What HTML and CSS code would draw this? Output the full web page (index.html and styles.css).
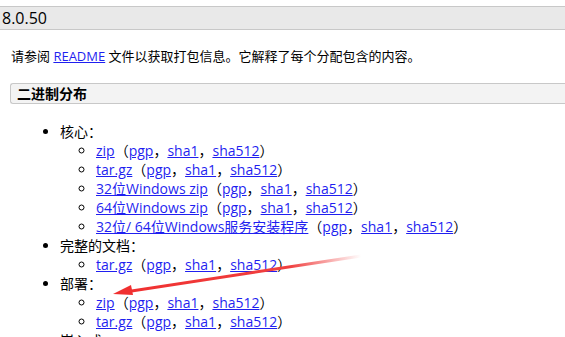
FILE: index.html
```html
<!DOCTYPE html>
<html lang="zh-CN">
<head>
    <meta charset="UTF-8">
    <title>Tomcat 8.0.50</title>
    <link rel="stylesheet" href="styles.css">
</head>
<body>
    <h3 class="version">8.0.50</h3>

    <p class="intro">请参阅 <a href="#">README</a> 文件以获取打包信息。它解释了每个分配包含的内容。</p>

    <div class="section">
        <h4 class="section-title">二进制分布</h4>

        <ul class="dist">
            <li>核心：
                <ul>
                    <li><a href="#">zip</a>（<a href="#">pgp</a>，<a href="#">sha1</a>，<a href="#">sha512</a>）</li>
                    <li><a href="#">tar.gz</a>（<a href="#">pgp</a>，<a href="#">sha1</a>，<a href="#">sha512</a>）</li>
                    <li><a href="#">32位Windows zip</a>（<a href="#">pgp</a>，<a href="#">sha1</a>，<a href="#">sha512</a>）</li>
                    <li><a href="#">64位Windows zip</a>（<a href="#">pgp</a>，<a href="#">sha1</a>，<a href="#">sha512</a>）</li>
                    <li><a href="#">32位/ 64位Windows服务安装程序</a>（<a href="#">pgp</a>，<a href="#">sha1</a>，<a href="#">sha512</a>）</li>
                </ul>
            </li>
            <li>完整的文档：
                <ul>
                    <li><a href="#">tar.gz</a>（<a href="#">pgp</a>，<a href="#">sha1</a>，<a href="#">sha512</a>）</li>
                </ul>
            </li>
            <li>部署：
                <ul>
                    <li><a href="#">zip</a>（<a href="#">pgp</a>，<a href="#">sha1</a>，<a href="#">sha512</a>）</li>
                    <li><a href="#">tar.gz</a>（<a href="#">pgp</a>，<a href="#">sha1</a>，<a href="#">sha512</a>）</li>
                </ul>
            </li>
            <li>嵌入式：</li>
        </ul>

        <!-- red annotation arrow pointing at the deployer zip -->
        <svg class="arrow" width="260" height="50" viewBox="0 0 260 50">
            <defs>
                <linearGradient id="fade" x1="0" y1="0" x2="1" y2="0">
                    <stop offset="0" stop-color="#f03030"/>
                    <stop offset="0.7" stop-color="#f04040"/>
                    <stop offset="1" stop-color="#f04040" stop-opacity="0"/>
                </linearGradient>
            </defs>
            <path d="M14 38 L250 2" stroke="url(#fade)" stroke-width="3" fill="none"/>
            <polygon points="2,40 20,31 22,41" fill="#f03030"/>
        </svg>
    </div>
</body>
</html>
```

FILE: styles.css
```css
body {
    margin: 0;
    font-family: "Open Sans", "Noto Sans CJK SC", sans-serif;
    font-size: 14px;
    color: #000;
    background: #fff;
    overflow: hidden;
}
a {
    color: #1f1ff0;
    text-decoration: underline;
}
.version {
    margin: 6px 0 0;
    height: 22px;
    line-height: 22px;
    padding-left: 2px;
    font-size: 16px;
    font-weight: normal;
    background: #e9e9e9;
    border-top: 1px solid #c8c8c8;
    border-bottom: 1px solid #c8c8c8;
}
.intro {
    margin: 17px 0 0 11px;
    font-size: 13px;
    line-height: 19px;
}
.section {
    position: relative;
    margin: 17px 0 0 10px;
}
.section-title {
    margin: 0;
    height: 19px;
    line-height: 19px;
    padding-left: 6px;
    font-size: 14px;
    font-weight: bold;
    background: #f3f3f3;
    border: 1px solid #c8c8c8;
    border-right: none;
    border-radius: 3px 0 0 3px;
}
.dist {
    margin: 18px 0 0;
    padding-left: 50px;
    line-height: 19px;
}
.dist ul {
    margin: 0;
    padding-left: 36px;
    list-style-type: circle;
}
.arrow {
    position: absolute;
    left: 101px;
    top: 171px;
}
```
